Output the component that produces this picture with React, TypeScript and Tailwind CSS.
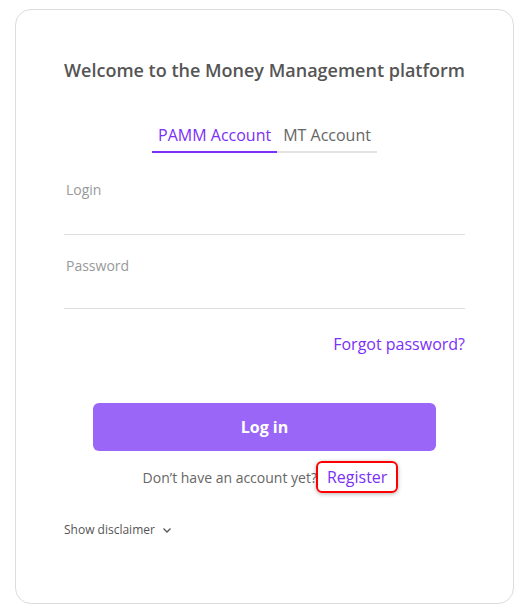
export default function App() {
  return (
    <div
      className="min-h-screen bg-white pt-[9px] pl-[15px]"
      style={{ fontFamily: '"Open Sans", "Noto Sans", sans-serif' }}
    >
      <div className="w-[499px] h-[595px] rounded-[16px] border border-[#dcdcdc] bg-white px-[48px] pt-[47px]">
        <h1 className="text-center text-[18px] leading-[26px] font-semibold text-[#555555]">
          Welcome to the Money Management platform
        </h1>

        <div className="mt-[36px] flex justify-center">
          <button className="h-[34px] px-[6px] border-b-2 border-[#7b2ff7] text-[16px] text-[#7b2ff7]">
            PAMM Account
          </button>
          <button className="h-[34px] px-[6px] border-b-2 border-[#e3e3e3] text-[16px] text-[#666666]">
            MT Account
          </button>
        </div>

        <div className="mt-[27px] h-[55px] border-b border-[#dddddd] px-[2px] text-[14px] leading-[20px] text-[#999999]">
          Login
        </div>
        <div className="mt-[21px] h-[53px] border-b border-[#dddddd] px-[2px] text-[14px] leading-[20px] text-[#999999]">
          Password
        </div>

        <div className="mt-[23px] flex justify-end">
          <a className="text-[16px] leading-[24px] text-[#7b2ff7]">Forgot password?</a>
        </div>

        <div className="mt-[47px] flex justify-center">
          <button className="w-[343px] h-[48px] rounded-[6px] bg-[#9966f8] text-[16px] font-bold text-white">
            Log in
          </button>
        </div>

        <div className="mt-[10px] pl-[12px] flex items-center justify-center text-[14px] text-[#666666]">
          <span>Don’t have an account yet?</span>
          <span className="ml-[-1px] h-[32px] px-[9px] flex items-center rounded-[6px] border-2 border-[#ff0000] text-[16px] text-[#7b2ff7] shadow-[0_1px_4px_rgba(0,0,0,0.3)]">
            Register
          </span>
        </div>

        <div className="mt-[28px] flex items-center gap-[6px] text-[12px] text-[#555555]">
          <span>Show disclaimer</span>
          <svg width="12" height="12" viewBox="0 0 12 12" fill="none">
            <path d="M2.5 4.5 L6 8 L9.5 4.5" stroke="#555555" strokeWidth="1.3" />
          </svg>
        </div>
      </div>
    </div>
  );
}
